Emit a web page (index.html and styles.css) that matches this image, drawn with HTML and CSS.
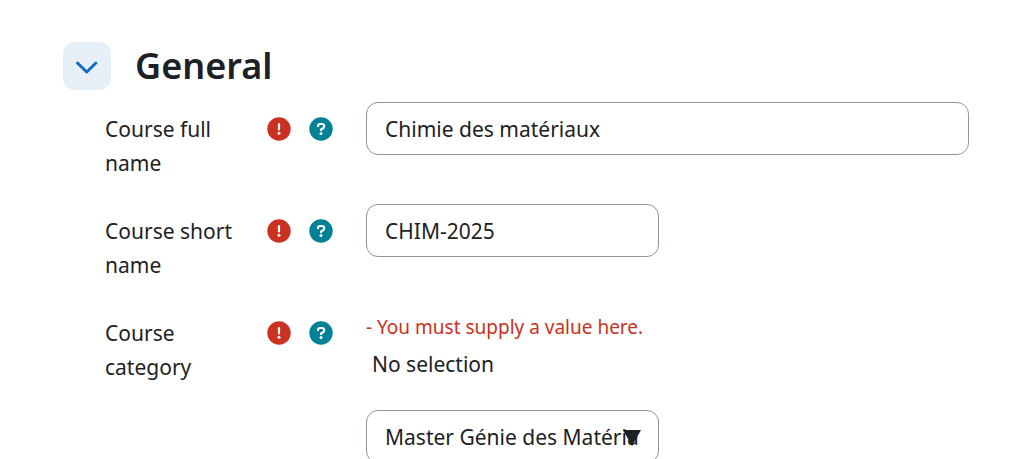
FILE: index.html
```html
<!DOCTYPE html>
<html lang="en">
<head>
    <meta charset="UTF-8">
    <meta name="viewport" content="width=device-width, initial-scale=1.0">
    <title>Add a new course</title>
    <link rel="stylesheet" href="styles.css">
</head>
<body>
    <!-- Icons shared by all rows -->
    <svg class="icon-defs" aria-hidden="true">
        <symbol id="icon-required" viewBox="0 0 24 24">
            <circle cx="12" cy="12" r="11.7" fill="#ca3120"/>
            <path d="M12 7.2v5.3" stroke="#fff" stroke-width="2.2" stroke-linecap="round"/>
            <circle cx="12" cy="16.3" r="1.5" fill="#fff"/>
        </symbol>
        <symbol id="icon-help" viewBox="0 0 24 24">
            <circle cx="12" cy="12" r="11.7" fill="#008196"/>
            <path d="M9 9.2C9 7.8 10 7 11.2 7h1.6C14.2 7 15.2 8 15.2 9.3c0 1-.5 1.7-1.4 2.2L12 12.5v.7" fill="none" stroke="#fff" stroke-width="2.2" stroke-linecap="round" stroke-linejoin="round"/>
            <circle cx="12" cy="16.6" r="1.5" fill="#fff"/>
        </symbol>
    </svg>

    <form class="course-form">
        <div class="section-header">
            <button type="button" class="toggle-btn" aria-expanded="true" aria-label="Collapse General">
                <svg viewBox="0 0 24 24" width="24" height="24"><path d="M2.5 9l9.2 9 9.2-9" fill="none" stroke="#0f6cbf" stroke-width="3" stroke-linecap="round" stroke-linejoin="round"/></svg>
            </button>
            <h2 class="section-title">General</h2>
        </div>

        <div class="fields">
            <div class="form-row">
                <div class="form-label">
                    <label for="fullname">Course full name</label>
                    <div class="addons">
                        <svg class="icon" role="img" aria-label="Required"><use href="#icon-required"/></svg>
                        <button type="button" class="help-btn" aria-label="Help with Course full name"><svg class="icon"><use href="#icon-help"/></svg></button>
                    </div>
                </div>
                <div class="form-field">
                    <input type="text" class="form-control" id="fullname" value="Chimie des matériaux">
                </div>
            </div>

            <div class="form-row">
                <div class="form-label">
                    <label for="shortname">Course short name</label>
                    <div class="addons">
                        <svg class="icon" role="img" aria-label="Required"><use href="#icon-required"/></svg>
                        <button type="button" class="help-btn" aria-label="Help with Course short name"><svg class="icon"><use href="#icon-help"/></svg></button>
                    </div>
                </div>
                <div class="form-field">
                    <input type="text" class="form-control short" id="shortname" value="CHIM-2025">
                </div>
            </div>

            <div class="form-row">
                <div class="form-label">
                    <label for="category">Course category</label>
                    <div class="addons">
                        <svg class="icon" role="img" aria-label="Required"><use href="#icon-required"/></svg>
                        <button type="button" class="help-btn" aria-label="Help with Course category"><svg class="icon"><use href="#icon-help"/></svg></button>
                    </div>
                </div>
                <div class="form-field">
                    <p class="error" id="categoryError">- You must supply a value here.</p>
                    <p class="selection">No selection</p>
                    <div class="autocomplete short">
                        <input type="text" class="form-control" id="category" role="combobox" aria-expanded="false" aria-describedby="categoryError" value="Master Génie des Matériaux">
                        <button type="button" class="arrow-btn" aria-label="Show categories">
                            <svg viewBox="0 0 18 16" width="18" height="16"><path d="M0 0h18L9 16z" fill="#1d2125"/></svg>
                        </button>
                    </div>
                </div>
            </div>
        </div>
    </form>
</body>
</html>
```

FILE: styles.css
```css
* {
    box-sizing: border-box;
    margin: 0;
    padding: 0;
}

body {
    font-family: "Segoe UI", "Noto Sans", sans-serif;
    font-size: 21px;
    line-height: 34px;
    color: #1d2125;
    background-color: #fff;
}

button {
    border: none;
    background: none;
    cursor: pointer;
}

svg {
    display: block;
}

.icon-defs {
    display: none;
}

.course-form {
    padding: 42px 55px 0 63px;
}

.section-header {
    display: flex;
    align-items: center;
    gap: 24px;
    margin-bottom: 12px;
}

.toggle-btn {
    display: flex;
    align-items: center;
    justify-content: center;
    width: 48px;
    height: 48px;
    border-radius: 12px;
    background-color: #e7f0f9;
}

.section-title {
    font-size: 36px;
    line-height: 48px;
    font-weight: 600;
}

.fields {
    display: flex;
    flex-direction: column;
    gap: 24px;
    padding-left: 42px;
}

.form-row {
    display: grid;
    grid-template-columns: 228px 1fr;
    gap: 33px;
}

.form-label {
    display: flex;
    justify-content: space-between;
    gap: 24px;
    padding-top: 10px;
}

.addons {
    display: flex;
    align-items: center;
    gap: 18px;
    height: 34px;
}

.icon {
    width: 24px;
    height: 24px;
}

.form-control {
    width: 100%;
    height: 53px;
    padding: 0 18px;
    border: 1px solid #8f959e;
    border-radius: 12px;
    background-color: #fff;
    color: inherit;
    font: inherit;
}

.short {
    width: 293px;
    max-width: 100%;
}

.error {
    padding-top: 4px;
    font-size: 19px;
    color: #ca3120;
}

.selection {
    padding: 3px 6px;
}

.autocomplete {
    position: relative;
    margin: 26px 0;
}

/* sits over the end of the typed text */
.arrow-btn {
    position: absolute;
    top: 20px;
    right: 18px;
}
```
